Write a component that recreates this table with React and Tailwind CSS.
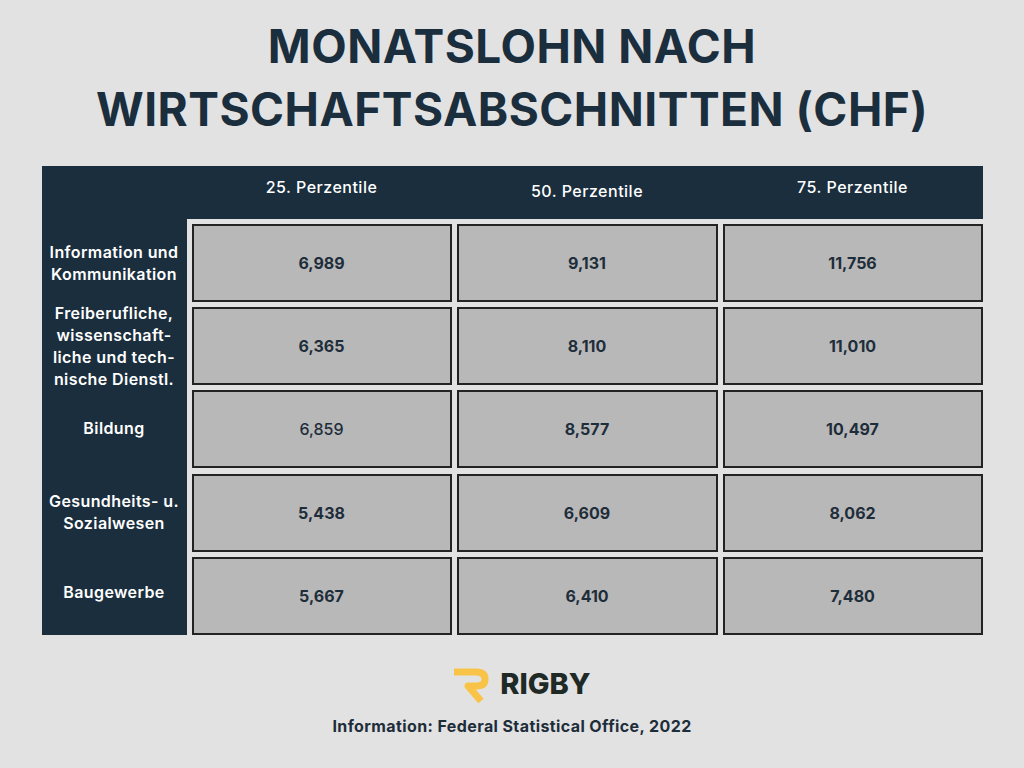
import React from "react";

const rows = [
  { label: ["Information und", "Kommunikation"], v: ["6,989", "9,131", "11,756"], w: [true, true, true] },
  { label: ["Freiberufliche,", "wissenschaft-", "liche und tech-", "nische Dienstl."], v: ["6,365", "8,110", "11,010"], w: [true, true, true] },
  { label: ["Bildung"], v: ["6,859", "8,577", "10,497"], w: [false, true, true] },
  { label: ["Gesundheits- u.", "Sozialwesen"], v: ["5,438", "6,609", "8,062"], w: [true, true, true] },
  { label: ["Baugewerbe"], v: ["5,667", "6,410", "7,480"], w: [true, true, true] },
];

export default function App() {
  return (
    <div
      className="w-[1024px] h-[768px] bg-[#e2e2e2] flex flex-col items-center overflow-hidden"
      style={{ fontFamily: "Inter, 'Noto Sans', sans-serif" }}
    >
      <h1 className="mt-[15px] text-[46px] leading-[63px] font-bold text-[#1a2e3d] text-center tracking-[0.5px]">
        MONATSLOHN NACH
        <br />
        WIRTSCHAFTSABSCHNITTEN (CHF)
      </h1>

      <div className="mt-[25px] w-[941px] flex flex-col">
        <div className="h-[53px] bg-[#1a2e3d] flex text-white text-[16px] tracking-[0.5px] font-medium">
          <div className="w-[150px]" />
          <div className="w-[260px] text-center pt-[9px]">25. Perzentile</div>
          <div className="w-[5px]" />
          <div className="w-[261px] text-center pt-[13px]">50. Perzentile</div>
          <div className="w-[5px]" />
          <div className="w-[260px] text-center pt-[9px]">75. Perzentile</div>
        </div>
        <div className="flex">
          <div className="w-[145px] bg-[#1a2e3d] flex flex-col pt-[5px] gap-[5px] pb-[1px]">
            {rows.map((r, i) => (
              <div
                key={i}
                className="h-[78px] flex items-center justify-center text-center text-white text-[16px] tracking-[0.4px] font-semibold leading-[22px]"
              >
                <div className={i === 4 ? "-mt-[6px]" : i === 2 ? "-mt-[2px]" : ""}>
                  {r.label.map((l, j) => (
                    <div key={j} className="whitespace-nowrap">{l}</div>
                  ))}
                </div>
              </div>
            ))}
          </div>
          <div className="ml-[5px] pt-[5px] grid grid-cols-[260px_261px_260px] gap-[5px]">
            {rows.map((r, i) =>
              r.v.map((v, j) => (
                <div
                  key={i + "-" + j}
                  className={
                    "h-[78px] bg-[#b8b8b8] border-2 border-[#232323] flex items-center justify-center text-[16px] text-[#1e2d3a] " +
                    (r.w[j] ? "font-bold" : "font-medium")
                  }
                >
                  {v}
                </div>
              ))
            )}
          </div>
        </div>
      </div>

      <div className="mt-[28px] flex items-center gap-[11px] pl-[16px]">
        <svg width="40" height="40" viewBox="0 0 40 40">
          <path
            d="M5 9 H27 Q36 9 36 16 Q36 23 28 23 H19 L32 38"
            fill="none"
            stroke="#f8c347"
            strokeWidth="7"
            strokeLinejoin="round"
          />
        </svg>
        <span className="text-[29px] font-extrabold text-[#1f2a26] leading-none">RIGBY</span>
      </div>

      <div className="mt-[11px] text-[16px] tracking-[0.4px] font-bold text-[#1e2d3a]">
        Information: Federal Statistical Office, 2022
      </div>
    </div>
  );
}
